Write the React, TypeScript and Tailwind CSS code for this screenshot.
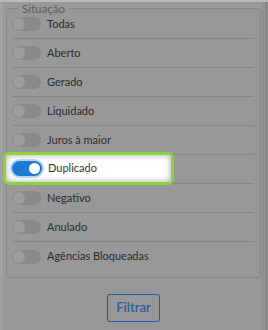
const situacoes = [
  "Todas",
  "Aberto",
  "Gerado",
  "Liquidado",
  "Juros à maior",
  "Duplicado",
  "Negativo",
  "Anulado",
  "Agências Bloqueadas",
];

const destaque = "Duplicado";

function Toggle({ on }: { on?: boolean }) {
  if (on) {
    return (
      <span className="flex items-center justify-end w-[30px] h-[15px] rounded-full bg-[#1a7ad6] ring-2 ring-[#b7d6f3] px-[2px] shrink-0">
        <span className="w-[11px] h-[11px] rounded-full bg-white" />
      </span>
    );
  }
  return (
    <span className="flex items-center w-[29px] h-[14px] rounded-full bg-[#8a8a8a] px-[1px] shrink-0">
      <span className="w-[12px] h-[12px] rounded-full bg-[#9c9c9c]" />
    </span>
  );
}

export default function App() {
  return (
    <div
      className="relative w-[268px] h-[330px] overflow-hidden bg-[#989898] text-[11px]"
      style={{ fontFamily: 'Lato, "Open Sans", "Liberation Sans", sans-serif' }}
    >
      <div className="h-[2px] bg-[#b9b9b9]" />
      <div className="flex h-[328px]">
        <div className="w-[3px] bg-[#a0a0a0]" />
        <div className="flex-1 flex flex-col pl-[3px] pr-[1px]">
          {/* Situação */}
          <fieldset className="border border-[#888888] rounded-[3px] pl-[5px] pr-[6px] pb-[6px]">
            <legend className="ml-[6px] px-[4px] text-[#5e5e5e] text-[11.5px] leading-[13px]">
              Situação
            </legend>
            <div className="-mt-[5px]">
              {situacoes.map((s, i) => (
                <div
                  key={s}
                  className={`relative flex items-center gap-[6px] h-[29px] ${
                    i < situacoes.length - 1 ? "border-b border-[#868686]" : ""
                  }`}
                >
                  {s === destaque ? (
                    <div className="absolute -left-[9px] -top-[3px] w-[171px] h-[33px] rounded-[6px] border-[3px] border-[#8cd33a] bg-white shadow-[inset_0_0_6px_rgba(0,0,0,0.35)] flex items-center gap-[6px] pl-[6px]">
                      <Toggle on />
                      <span className="text-[#333333]">{s}</span>
                    </div>
                  ) : (
                    <>
                      <Toggle />
                      <span className="text-[#2c2c2c]">{s}</span>
                    </>
                  )}
                </div>
              ))}
            </div>
          </fieldset>
          <div className="flex justify-center mt-[16px]">
            <button className="w-[53px] h-[28px] border-[1.5px] border-[#1d5cad] rounded-[3px] text-[#2a5c9e] font-semibold text-[13px]">
              Filtrar
            </button>
          </div>
        </div>
        <div className="w-[6px] bg-[#909090] flex justify-end pr-[1px]">
          <div className="w-[1px] bg-[#7c7c7c]" />
        </div>
      </div>
    </div>
  );
}
